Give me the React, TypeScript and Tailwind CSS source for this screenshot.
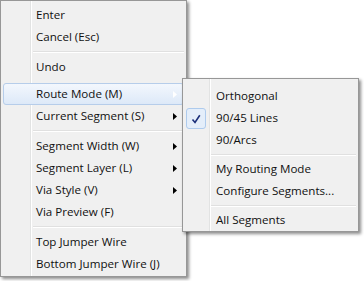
import React from 'react';

type Item =
  | { kind: 'item'; label: string; arrow?: boolean; hot?: boolean; checked?: boolean }
  | { kind: 'sep' }
  | { kind: 'gap' };

const mainItems: Item[] = [
  { kind: 'item', label: 'Enter' },
  { kind: 'item', label: 'Cancel (Esc)' },
  { kind: 'sep' },
  { kind: 'item', label: 'Undo' },
  { kind: 'gap' },
  { kind: 'item', label: 'Route Mode (M)', arrow: true, hot: true },
  { kind: 'item', label: 'Current Segment (S)', arrow: true },
  { kind: 'sep' },
  { kind: 'item', label: 'Segment Width (W)', arrow: true },
  { kind: 'item', label: 'Segment Layer (L)', arrow: true },
  { kind: 'item', label: 'Via Style (V)', arrow: true },
  { kind: 'item', label: 'Via Preview (F)' },
  { kind: 'sep' },
  { kind: 'item', label: 'Top Jumper Wire' },
  { kind: 'item', label: 'Bottom Jumper Wire (J)' },
];

const subItems: Item[] = [
  { kind: 'item', label: 'Orthogonal' },
  { kind: 'item', label: '90/45 Lines', checked: true },
  { kind: 'item', label: '90/Arcs' },
  { kind: 'sep' },
  { kind: 'item', label: 'My Routing Mode' },
  { kind: 'item', label: 'Configure Segments...' },
  { kind: 'sep' },
  { kind: 'item', label: 'All Segments' },
];

function Arrow({ light }: { light?: boolean }) {
  return (
    <svg width="4" height="7" viewBox="0 0 4 7" className="shrink-0">
      <path d="M0 0 L4 3.5 L0 7 Z" fill={light ? '#ffffff' : '#000000'} />
    </svg>
  );
}

function Row({ item, indent }: { item: Item; indent: string }) {
  if (item.kind === 'sep') {
    return (
      <div
        className={`flex flex-col justify-center ${
          indent === 'main' ? 'h-[8px] pl-[30px]' : 'h-[7px] pl-[26px]'
        }`}
      >
        <div className="h-px bg-[#e0e0e0]" />
        <div className="h-px bg-white" />
      </div>
    );
  }
  if (item.kind === 'gap') return <div className="h-[5px]" />;

  return (
    <div
      className={`relative h-[22px] flex items-center pr-[6px] rounded-[3px] border ${
        item.hot
          ? 'border-[#b6cdea] bg-[linear-gradient(to_bottom,#f3f7fd,#dde9f8)]'
          : 'border-transparent'
      } ${indent === 'main' ? 'pl-[32px]' : 'pl-[30px]'}`}
    >
      {item.checked && (
        <div className="absolute left-0 top-0 w-[20px] h-[21px] rounded-[3px] border border-[#aecbed] bg-[#e4eefa] flex items-center justify-center">
          <svg width="10" height="10" viewBox="0 0 10 10">
            <path d="M1.5 5.5 L4 8.5 L8.8 1.2" fill="none" stroke="#1b2f7a" strokeWidth="1.6" />
          </svg>
        </div>
      )}
      <span className="flex-1 whitespace-nowrap">{item.label}</span>
      {item.arrow && <Arrow light={item.hot} />}
    </div>
  );
}

export default function App() {
  return (
    <div
      className="relative w-[364px] h-[281px] bg-white overflow-hidden text-[11.6px] text-[#111]"
      style={{ fontFamily: '"Segoe UI", "Open Sans", "Noto Sans", sans-serif' }}
    >
      <div className="w-[187px] border border-[#979797] bg-[linear-gradient(to_right,#f0f0f0_29px,#e2e3e3_29px,#e2e3e3_30px,#ffffff_30px,#ffffff_31px,#f0f0f0_31px)] pt-[3px] pb-[1px] px-[2px] shadow-[2px_2px_3px_rgba(0,0,0,0.45)]">
        {mainItems.map((it, i) => (
          <Row key={i} item={it} indent="main" />
        ))}
      </div>

      <div className="absolute left-[182px] top-[78px] w-[177px] border border-[#979797] bg-[linear-gradient(to_right,#f0f0f0_26px,#e2e3e3_26px,#e2e3e3_27px,#ffffff_27px,#ffffff_28px,#f0f0f0_28px)] pt-[6px] pb-0 px-[2px] shadow-[2px_2px_3px_rgba(0,0,0,0.45)]">
        {subItems.map((it, i) => (
          <Row key={i} item={it} indent="sub" />
        ))}
      </div>
    </div>
  );
}
